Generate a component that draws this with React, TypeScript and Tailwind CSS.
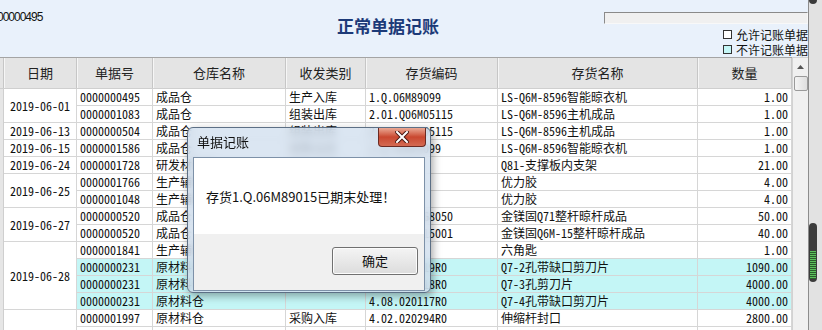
type Row = {
  date?: string;
  span?: number;
  no: string;
  wh: string;
  kind: string;
  code: string;
  name: string;
  qty: string;
  hl?: boolean;
};

const rows: Row[] = [
  { date: '2019-06-01', span: 2, no: '0000000495', wh: '成品仓', kind: '生产入库', code: '1.Q.06M89099', name: 'LS-Q6M-8596智能晾衣机', qty: '1.00' },
  { no: '0000001083', wh: '成品仓', kind: '组装出库', code: '2.01.Q06M05115', name: 'LS-Q6M-8596主机成品', qty: '1.00' },
  { date: '2019-06-13', span: 1, no: '0000000504', wh: '成品仓', kind: '组装出库', code: '2.01.Q06M05115', name: 'LS-Q6M-8596主机成品', qty: '1.00' },
  { date: '2019-06-15', span: 1, no: '0000001586', wh: '成品仓', kind: '销售出库', code: '1.Q.06M89099', name: 'LS-Q6M-8596智能晾衣机', qty: '1.00' },
  { date: '2019-06-24', span: 1, no: '0000001728', wh: '研发材料仓', kind: '材料出库', code: '3.01.0081', name: 'Q81-支撑板内支架', qty: '21.00' },
  { date: '2019-06-25', span: 2, no: '0000001766', wh: '生产辅料仓', kind: '材料出库', code: '3.05.0012', name: '优力胶', qty: '4.00' },
  { no: '0000001048', wh: '生产辅料仓', kind: '材料出库', code: '3.05.0012', name: '优力胶', qty: '4.00' },
  { date: '2019-06-27', span: 2, no: '0000000520', wh: '成品仓', kind: '组装出库', code: '2.01.Q71ZG8050', name: '金镁固Q71整杆晾杆成品', qty: '50.00' },
  { no: '0000000520', wh: '成品仓', kind: '组装出库', code: '2.01.Q6M-15001', name: '金镁固Q6M-15整杆晾杆成品', qty: '40.00' },
  { date: '2019-06-28', span: 4, no: '0000001841', wh: '生产辅料仓', kind: '材料出库', code: '3.05.0031', name: '六角匙', qty: '1.00' },
  { no: '0000000231', wh: '原材料仓', kind: '', code: '4.08.020119R0', name: 'Q7-2孔带缺口剪刀片', qty: '1090.00', hl: true },
  { no: '0000000231', wh: '原材料仓', kind: '', code: '4.08.020118R0', name: 'Q7-3孔剪刀片', qty: '4000.00', hl: true },
  { no: '0000000231', wh: '原材料仓', kind: '', code: '4.08.020117R0', name: 'Q7-4孔带缺口剪刀片', qty: '4000.00', hl: true },
  { date: '', span: 2, no: '0000001997', wh: '原材料仓', kind: '采购入库', code: '4.02.020294R0', name: '伸缩杆封口', qty: '2800.00' },
  { no: '', wh: '', kind: '', code: '', name: '', qty: '' },
];

const spanClass: Record<number, string> = { 1: '', 2: 'row-span-2', 4: 'row-span-4' };

const headers = ['日期', '单据号', '仓库名称', '收发类别', '存货编码', '存货名称', '数量'];

const cell = 'border-r border-b border-[#d6d6d6] px-[3px] whitespace-nowrap overflow-hidden leading-[16px]';

function Dialog() {
  return (
    <div className="absolute left-[187px] top-[127px] w-[244px] h-[166px] rounded-[6px] border border-[#5c6f85] bg-[#d2e0ef]/80 backdrop-blur-[4px] shadow-[2px_3px_8px_rgba(0,0,0,0.35)] flex flex-col">
      <div className="relative h-[28px] flex items-center pl-[9px] text-[13px] text-[#111]">
        单据记账
        <div className="absolute right-[4px] top-0 w-[48px] h-[19px] rounded-b-[4px] border border-t-0 border-[#6b2a22] bg-gradient-to-b from-[#e9a894] via-[#c9472f] to-[#d46a52] flex items-center justify-center">
          <svg width="14" height="12" viewBox="0 0 14 12">
            <path d="M2 1 L12 11 M12 1 L2 11" stroke="#4a1a14" strokeWidth="4" strokeLinecap="square" />
            <path d="M2 1 L12 11 M12 1 L2 11" stroke="#ffffff" strokeWidth="2" strokeLinecap="square" />
          </svg>
        </div>
      </div>
      <div className="mx-[5px] mt-[1px] h-[134px] border border-[#7d91a8] flex flex-col">
        <div className="h-[76px] bg-white pl-[12px] pt-[30px] text-[13px] leading-[18px] text-[#111]">
          存货1.Q.06M89015已期末处理！
        </div>
        <div className="flex-1 bg-[#f0f0f0] flex justify-end items-start pt-[13px] pr-[6px]">
          <div className="w-[86px] h-[28px] rounded-[3px] border border-[#707070] bg-gradient-to-b from-[#f4f4f4] to-[#dcdcdc] shadow-[inset_0_0_0_1px_#fcfcfc] flex items-center justify-center text-[13px] text-[#111]">
            确定
          </div>
        </div>
      </div>
    </div>
  );
}

export default function App() {
  return (
    <div className="relative w-[822px] h-[330px] overflow-hidden flex bg-[#e9f1fb] font-['Noto_Sans_CJK_SC',sans-serif] text-[#111]">
      <div className="w-[808px] flex flex-col">
        <div className="h-[57px] flex">
          <div className="w-[340px] pt-[11px] -ml-[3px] text-[12px] leading-[13px] tracking-[-1px] font-['Liberation_Sans',sans-serif]">
            00000495
          </div>
          <div className="pt-[14px] text-[17px] leading-[24px] font-bold text-[#1c3a78] whitespace-nowrap">正常单据记账</div>
          <div className="ml-auto w-[204px] flex flex-col items-end">
            <div className="mt-[12px] h-[12px] w-full border border-t-[#8a8a8a] border-l-[#8a8a8a] border-b-[#f8f8f8] border-r-[#f8f8f8] bg-[#f0f0f0]" />
            <div className="mt-[3px] flex items-center text-[12px] leading-[15px] whitespace-nowrap">
              <span className="w-[9px] h-[9px] border border-[#333] bg-white mr-[4px]" />
              允许记账单据
            </div>
            <div className="flex items-center text-[12px] leading-[15px] whitespace-nowrap">
              <span className="w-[9px] h-[9px] border border-[#333] bg-[#c4f6f6] mr-[4px]" />
              不许记账单据
            </div>
          </div>
        </div>

        <div className="flex-1 flex min-h-0">
          <div className="w-[792px] flex flex-col">
            <div className="h-[32px] flex border-t border-[#a4a4a4] bg-[#e4e4e4] border-b border-b-[#cfcfcf]">
              <div className="w-[4px] border-r border-[#c6c6c6]" />
              <div className="grid grid-cols-[73px_76px_133px_80px_132px_200px_94px]">
                {headers.map((h) => (
                  <div key={h} className="border-r border-[#c6c6c6] shadow-[inset_1px_0_0_#f6f6f6] flex items-center justify-center text-[13px] text-[#222]">
                    {h}
                  </div>
                ))}
              </div>
            </div>
            <div className="flex-1 flex bg-white overflow-hidden">
              <div className="w-[4px] bg-[#e6e6e6] border-r border-[#cfcfcf]" />
              <div className="grid grid-cols-[73px_76px_133px_80px_132px_200px_94px] auto-rows-[17px] content-start text-[12px] font-['Noto_Sans_Mono_CJK_SC','Liberation_Mono','Noto_Sans_CJK_SC',monospace]">
                {rows.map((r, i) => {
                  const bg = r.hl ? 'bg-[#c4f6f6]' : 'bg-white';
                  return [
                    r.span ? (
                      <div key={`d${i}`} className={`${cell} ${spanClass[r.span]} bg-white flex items-center justify-center`}>
                        {r.date}
                      </div>
                    ) : null,
                    <div key={`n${i}`} className={`${cell} ${bg}`}>{r.no}</div>,
                    <div key={`w${i}`} className={`${cell} ${bg}`}>{r.wh}</div>,
                    <div key={`k${i}`} className={`${cell} ${bg}`}>{r.kind}</div>,
                    <div key={`c${i}`} className={`${cell} ${bg}`}>{r.code}</div>,
                    <div key={`m${i}`} className={`${cell} ${bg}`}>{r.name}</div>,
                    <div key={`q${i}`} className={`${cell} ${bg} text-right`}>{r.qty}</div>,
                  ];
                })}
              </div>
            </div>
          </div>
          {/* table scrollbar */}
          <div className="w-[16px] bg-[#f0f0f0] border-l border-t border-[#d2d2d2] flex flex-col items-center">
            <div className="h-[18px] flex items-center justify-center">
              <svg width="7" height="4" viewBox="0 0 7 4">
                <path d="M0 4 L3.5 0 L7 4 Z" fill="#555" />
              </svg>
            </div>
            <div className="w-[14px] h-[15px] rounded-[2px] border border-[#9a9a9a] bg-gradient-to-r from-[#f4f4f4] to-[#dedede]" />
          </div>
        </div>
      </div>

      {/* window edge scrollbar */}
      <div className="w-[14px] bg-[#e2e2e2] border-l border-[#8c8c8c] flex flex-col">
        <div className="w-[8px] h-[4px] rounded-b-[4px] bg-[#3a3a3a]" />
        <div className="h-[219px]" />
        <div className="w-[8px] h-[59px] rounded-[4px] bg-[#3c3c3c] flex flex-col justify-end items-center pb-[3px]">
          <div className="w-[6px] h-[28px] bg-[repeating-linear-gradient(to_bottom,#5cc15c_0px,#5cc15c_1px,#2c5c2c_1px,#2c5c2c_2px)]" />
        </div>
      </div>

      <Dialog />
    </div>
  );
}
